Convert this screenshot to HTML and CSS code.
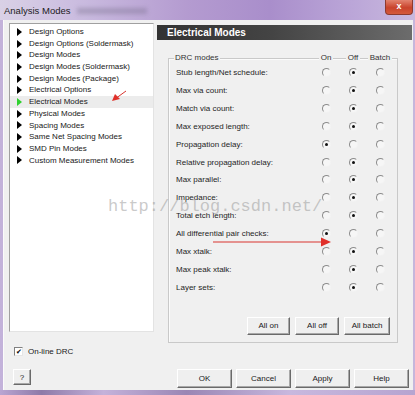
FILE: index.html
```
<!DOCTYPE html>
<html lang="en">
<head>
    <meta charset="UTF-8">
    <title>Analysis Modes</title>
    <link rel="stylesheet" href="styles.css">
</head>
<body>
    <div class="window">
        <!-- Title bar -->
        <div class="titlebar">
            <span class="title">Analysis Modes</span>
            <span class="title-smudge"></span>
            <span class="close-btn">x</span>
        </div>

        <div class="client">
            <!-- Left: mode list -->
            <div class="left-col">
                <ul class="tree">
                    <li class="tree-item"><span class="arrow"></span>Design Options</li>
                    <li class="tree-item"><span class="arrow"></span>Design Options (Soldermask)</li>
                    <li class="tree-item"><span class="arrow"></span>Design Modes</li>
                    <li class="tree-item"><span class="arrow"></span>Design Modes (Soldermask)</li>
                    <li class="tree-item"><span class="arrow"></span>Design Modes (Package)</li>
                    <li class="tree-item"><span class="arrow"></span>Electrical Options</li>
                    <li class="tree-item selected"><span class="arrow"></span>Electrical Modes</li>
                    <li class="tree-item"><span class="arrow"></span>Physical Modes</li>
                    <li class="tree-item"><span class="arrow"></span>Spacing Modes</li>
                    <li class="tree-item"><span class="arrow"></span>Same Net Spacing Modes</li>
                    <li class="tree-item"><span class="arrow"></span>SMD Pin Modes</li>
                    <li class="tree-item"><span class="arrow"></span>Custom Measurement Modes</li>
                </ul>
                <div class="check-row"><span class="checkbox">&#10004;</span>On-line DRC</div>
                <button class="btn btn-help">?</button>
            </div>

            <!-- Right: electrical modes panel -->
            <div class="right-col">
                <div class="panel-header">Electrical Modes</div>
                <div class="groupbox">
                    <div class="gb-head">
                        <span class="gb-title">DRC modes</span>
                        <span class="gb-col"><span class="gb-label">On</span></span>
                        <span class="gb-col"><span class="gb-label">Off</span></span>
                        <span class="gb-col"><span class="gb-label">Batch</span></span>
                    </div>

                    <div class="mode-row"><span class="mode-label">Stub length/Net schedule:</span><span class="cell"><span class="radio"></span></span><span class="cell"><span class="radio on"></span></span><span class="cell"><span class="radio"></span></span></div>
                    <div class="mode-row"><span class="mode-label">Max via count:</span><span class="cell"><span class="radio"></span></span><span class="cell"><span class="radio on"></span></span><span class="cell"><span class="radio"></span></span></div>
                    <div class="mode-row"><span class="mode-label">Match via count:</span><span class="cell"><span class="radio"></span></span><span class="cell"><span class="radio on"></span></span><span class="cell"><span class="radio"></span></span></div>
                    <div class="mode-row"><span class="mode-label">Max exposed length:</span><span class="cell"><span class="radio"></span></span><span class="cell"><span class="radio on"></span></span><span class="cell"><span class="radio"></span></span></div>
                    <div class="mode-row"><span class="mode-label">Propagation delay:</span><span class="cell"><span class="radio on"></span></span><span class="cell"><span class="radio"></span></span><span class="cell"><span class="radio"></span></span></div>
                    <div class="mode-row"><span class="mode-label">Relative propagation delay:</span><span class="cell"><span class="radio"></span></span><span class="cell"><span class="radio on"></span></span><span class="cell"><span class="radio"></span></span></div>
                    <div class="mode-row"><span class="mode-label">Max parallel:</span><span class="cell"><span class="radio"></span></span><span class="cell"><span class="radio on"></span></span><span class="cell"><span class="radio"></span></span></div>
                    <div class="mode-row"><span class="mode-label">Impedance:</span><span class="cell"><span class="radio"></span></span><span class="cell"><span class="radio on"></span></span><span class="cell"><span class="radio"></span></span></div>
                    <div class="mode-row"><span class="mode-label">Total etch length:</span><span class="cell"><span class="radio"></span></span><span class="cell"><span class="radio on"></span></span><span class="cell"><span class="radio"></span></span></div>
                    <div class="mode-row"><span class="mode-label">All differential pair checks:</span><span class="cell"><span class="radio on"></span></span><span class="cell"><span class="radio"></span></span><span class="cell"><span class="radio"></span></span></div>
                    <div class="mode-row"><span class="mode-label">Max xtalk:</span><span class="cell"><span class="radio"></span></span><span class="cell"><span class="radio on"></span></span><span class="cell"><span class="radio"></span></span></div>
                    <div class="mode-row"><span class="mode-label">Max peak xtalk:</span><span class="cell"><span class="radio"></span></span><span class="cell"><span class="radio on"></span></span><span class="cell"><span class="radio"></span></span></div>
                    <div class="mode-row"><span class="mode-label">Layer sets:</span><span class="cell"><span class="radio"></span></span><span class="cell"><span class="radio on"></span></span><span class="cell"><span class="radio"></span></span></div>

                    <div class="gb-buttons">
                        <button class="btn btn-all-on">All on</button>
                        <button class="btn btn-all-off">All off</button>
                        <button class="btn btn-all-batch">All batch</button>
                    </div>
                </div>

                <div class="dialog-buttons">
                    <button class="btn btn-dialog">OK</button>
                    <button class="btn btn-dialog">Cancel</button>
                    <button class="btn btn-dialog">Apply</button>
                    <button class="btn btn-dialog">Help</button>
                </div>
            </div>
        </div>

        <div class="frame-bottom"></div>

        <!-- Overlays on the screenshot -->
        <div class="watermark">http://blog.csdn.net/</div>
        <svg class="annotations" width="415" height="395" viewBox="0 0 415 395">
            <line x1="126" y1="91" x2="117" y2="97.5" stroke="#d9352f" stroke-width="1"/>
            <polygon points="112,101 115,94 120,99" fill="#e0302a"/>
            <line x1="213" y1="242" x2="323" y2="242" stroke="#d9352f" stroke-width="1"/>
            <polygon points="331,242 321,237.5 321,246.5" fill="#e0302a"/>
        </svg>
    </div>
</body>
</html>
```

FILE: styles.css
```
* {
    margin: 0;
    padding: 0;
    box-sizing: border-box;
}

body {
    font-family: 'Liberation Sans', Arial, sans-serif;
    font-size: 8px;
    color: #1a1a1a;
    background: #fff;
    overflow: hidden;
}

.window {
    position: relative;
    width: 415px;
    height: 395px;
    display: flex;
    flex-direction: column;
    background: linear-gradient(90deg, #c3b2da 0%, #b9a4d4 50%, #c6b6dc 100%);
}

.titlebar {
    height: 20px;
    display: flex;
    align-items: flex-start;
    background: linear-gradient(90deg, #d9d1e6 0%, #cbbde0 18%, #b49bd0 45%, #a98ecb 65%, #bba6d8 85%, #c9b9de 100%);
}

.title {
    font-size: 9.5px;
    color: #1c1c1c;
    margin: 5px 0 0 4px;
}

.title-smudge {
    width: 70px;
    height: 6px;
    margin: 8px 0 0 6px;
    background: rgba(110, 100, 130, 0.35);
    filter: blur(2px);
}

.close-btn {
    margin-left: auto;
    margin-right: 2px;
    width: 28px;
    height: 15px;
    border-radius: 0 0 4px 4px;
    background: linear-gradient(180deg, #e2836f 0%, #c9432c 55%, #d45a3c 100%);
    border: 1px solid #8e3a2e;
    border-top: none;
    color: #fff;
    font-weight: bold;
    font-size: 9px;
    line-height: 12px;
    text-align: center;
}

.client {
    height: 370px;
    margin: 0 2px 0 3px;
    padding: 3px 1px 0 5px;
    background: #f0f0f0;
    border-left: 1px solid #fbfbfb;
    display: flex;
    gap: 3px;
}

.frame-bottom {
    flex: 1;
    background: linear-gradient(90deg, #b9a5d2 0%, #8e7aa8 10%, #c4b2da 25%, #9a86b4 45%, #c8b8de 70%, #b6a4d0 100%);
}

/* left column */

.left-col {
    width: 145px;
    display: flex;
    flex-direction: column;
}

.tree {
    list-style: none;
    height: 309px;
    background: #fff;
    border: 1px solid;
    border-color: #a0a0a0 #e3e3e3 #e3e3e3 #a0a0a0;
    padding-top: 2px;
}

.tree-item {
    height: 11.7px;
    line-height: 11.7px;
    display: flex;
    align-items: center;
    padding-left: 7px;
    white-space: nowrap;
    color: #202020;
}

.tree-item.selected {
    background: #ececec;
}

.arrow {
    width: 0;
    height: 0;
    border-top: 4px solid transparent;
    border-bottom: 4px solid transparent;
    border-left: 5px solid #000;
    margin-right: 7px;
}

.tree-item.selected .arrow {
    border-left-color: #2fd12f;
}

.check-row {
    display: flex;
    align-items: center;
    margin: 14px 0 0 5px;
    height: 10px;
    color: #202020;
}

.checkbox {
    width: 9px;
    height: 9px;
    background: #fff;
    border: 1px solid;
    border-color: #808080 #e6e6e6 #e6e6e6 #808080;
    font-size: 7px;
    line-height: 7px;
    text-align: center;
    color: #000;
    margin-right: 5px;
}

.btn {
    font-family: 'Liberation Sans', Arial, sans-serif;
    font-size: 8px;
    color: #1a1a1a;
    background: #efefef;
    border: 1px solid;
    border-color: #ffffff #6a6a6a #6a6a6a #ffffff;
    box-shadow: inset -1px -1px 0 #a8a8a8;
}

.btn-help {
    width: 18px;
    height: 16px;
    margin: 13px 0 0 4px;
}

/* right column */

.right-col {
    flex: 1;
    display: flex;
    flex-direction: column;
}

.panel-header {
    margin-top: 2px;
    height: 15px;
    line-height: 15px;
    padding-left: 10px;
    font-size: 10px;
    font-weight: bold;
    color: #fff;
    background: linear-gradient(90deg, #333 0%, #444 45%, #6c6c6c 100%);
}

.groupbox {
    margin: 18px 14px 0 11px;
    border: 1px solid #c9c9c9;
    box-shadow: inset 1px 1px 0 #fbfbfb;
    padding: 0 3.5px 7px 7px;
}

.gb-head {
    margin-top: -6px;
    height: 10px;
    line-height: 10px;
    display: flex;
    color: #333;
}

.gb-title {
    margin-left: -2px;
    padding: 0 1px;
    background: #f0f0f0;
    margin-right: auto;
}

.gb-col {
    width: 27px;
    display: flex;
    justify-content: center;
}

.gb-label {
    background: #f0f0f0;
    padding: 0 2px;
}

.mode-row {
    height: 17.85px;
    display: flex;
    align-items: center;
}

.gb-head + .mode-row {
    margin-top: 1px;
}

.mode-label {
    flex: 1;
    color: #1e1e1e;
}

.cell {
    width: 27px;
    display: flex;
    justify-content: center;
    align-items: center;
}

.radio {
    position: relative;
    width: 9px;
    height: 9px;
    border-radius: 50%;
    border: 1px solid;
    border-color: #8c8c8c #f2f2f2 #f2f2f2 #8c8c8c;
    background: #f6f6f6;
}

.radio.on::after {
    content: "";
    position: absolute;
    left: 2px;
    top: 2px;
    width: 3px;
    height: 3px;
    border-radius: 50%;
    background: #111;
}

.gb-buttons {
    margin-top: 21px;
    display: flex;
    justify-content: flex-end;
    gap: 5px;
    padding-right: 3.5px;
}

.gb-buttons .btn {
    height: 18px;
}

.btn-all-on { width: 43px; }
.btn-all-off { width: 44px; }
.btn-all-batch { width: 46px; }

.dialog-buttons {
    margin: 26px 0 0 20px;
    display: flex;
    gap: 4px;
}

.btn-dialog {
    width: 55px;
    height: 19px;
}

/* overlays */

.watermark {
    position: absolute;
    left: 108px;
    top: 197px;
    font-family: 'Liberation Mono', monospace;
    font-size: 17px;
    color: rgba(150, 150, 150, 0.5);
    white-space: nowrap;
    pointer-events: none;
}

.annotations {
    position: absolute;
    top: 0;
    left: 0;
    pointer-events: none;
}
```
